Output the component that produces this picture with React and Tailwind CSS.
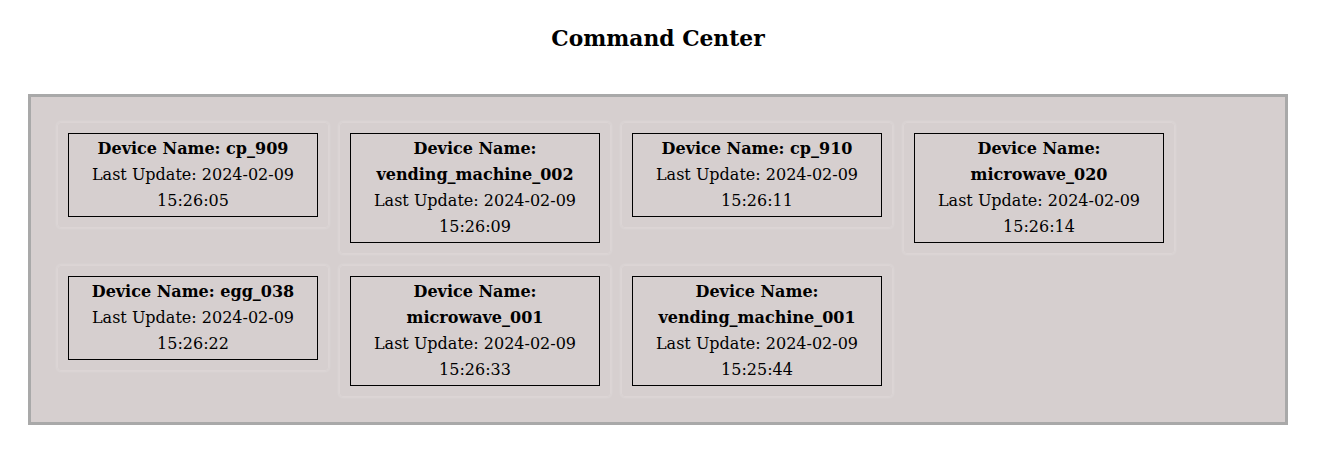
import React from "react";

const devices = [
  { name: "cp_909", updated: "2024-02-09 15:26:05" },
  { name: "vending_machine_002", updated: "2024-02-09 15:26:09" },
  { name: "cp_910", updated: "2024-02-09 15:26:11" },
  { name: "microwave_020", updated: "2024-02-09 15:26:14" },
  { name: "egg_038", updated: "2024-02-09 15:26:22" },
  { name: "microwave_001", updated: "2024-02-09 15:26:33" },
  { name: "vending_machine_001", updated: "2024-02-09 15:25:44" },
];

function DeviceCard({ device }) {
  return (
    <div className="m-[5px] p-[10px] rounded-[4px] border border-[#dcd5d5] shadow-[0_0_3px_rgba(255,255,255,0.35)]">
      <div className="w-[250px] border border-black px-1 py-[2px] text-center leading-[26px]">
        <div className="font-bold">Device Name: {device.name}</div>
        <div>Last Update: {device.updated}</div>
      </div>
    </div>
  );
}

export default function App() {
  return (
    <div className="min-h-screen bg-white text-black text-[16px]" style={{ fontFamily: '"DejaVu Serif", serif' }}>
      <div className="ml-[28px] mr-[44px] pt-[23px]">
        <h1 className="text-center text-[21.8px] font-bold leading-[32px]">Command Center</h1>
        <div className="mt-[39px] border-[3px] border-[#a9a9a9] bg-[#d6cfcf] pt-[20px] pb-[20px] pl-[21px] pr-[19px] flex flex-wrap items-start gap-y-[1px]">
          {devices.map((d) => (
            <DeviceCard key={d.name} device={d} />
          ))}
        </div>
      </div>
    </div>
  );
}
